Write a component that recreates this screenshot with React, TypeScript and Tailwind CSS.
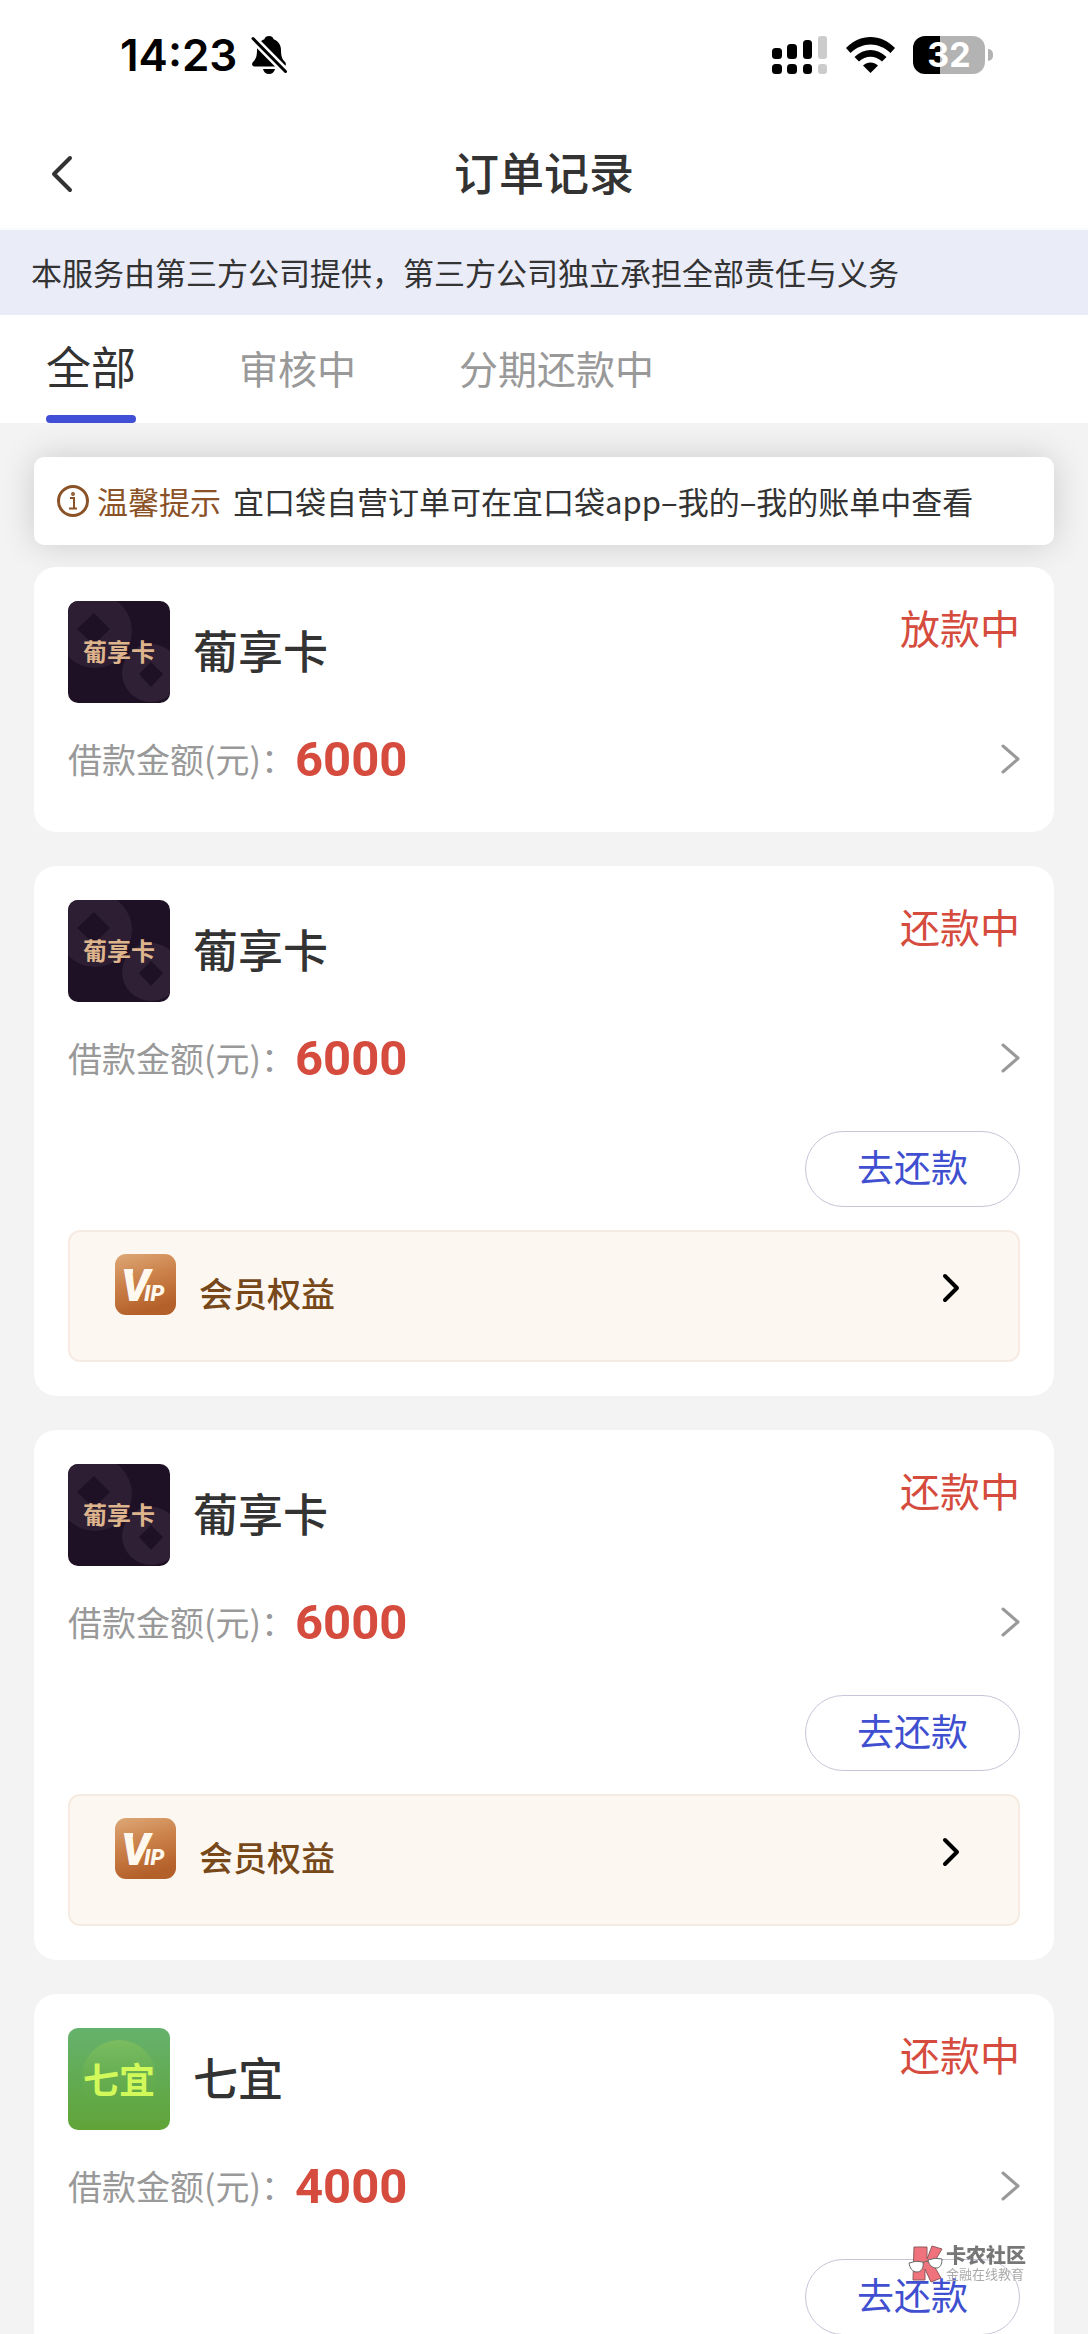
type Order = {
  id: number;
  name: string;
  logo: "puxiang" | "qiyi";
  amount: string;
  status: string;
  repay: boolean;
  vip: boolean;
};

const tabs = ["全部", "审核中", "分期还款中"];

const orders: Order[] = [
  { id: 1, name: "葡享卡", logo: "puxiang", amount: "6000", status: "放款中", repay: false, vip: false },
  { id: 2, name: "葡享卡", logo: "puxiang", amount: "6000", status: "还款中", repay: true, vip: true },
  { id: 3, name: "葡享卡", logo: "puxiang", amount: "6000", status: "还款中", repay: true, vip: true },
  { id: 4, name: "七宜", logo: "qiyi", amount: "4000", status: "还款中", repay: true, vip: false },
];

function StatusBar() {
  return (
    <div className="flex h-[110px] items-center justify-between pr-[95px] pl-[120px]">
      <div className="flex items-center gap-[14px]">
        <span className="font-['Inter',sans-serif] text-[44px] leading-none font-semibold text-black">14:23</span>
        <svg width="36" height="40" viewBox="0 0 36 40" aria-hidden="true">
          <path
            d="M18 1c2.400 0 4 1.200 4.600 3.200C27.500 6 30 10 30 15c0 7 1.500 9.500 4 12 1.500 1.600 1.200 4.500-1.500 4.500h-29C.8 31.500.5 28.600 2 27c2.500-2.500 4-5 4-12 0-5 2.500-9 7.400-10.800C14 2.200 15.600 1 18 1z"
            fill="#000"
          />
          <path d="M12 34h12c-.6 3-3 5-6 5s-5.400-2-6-5z" fill="#000" />
          <path d="M2 3.500L34.500 36.500" stroke="#fff" strokeWidth="8" />
          <path d="M2 3.500L34.500 36.500" stroke="#000" strokeWidth="3" strokeLinecap="round" />
        </svg>
      </div>
      <div className="flex items-center gap-[18px]">
        <svg width="56" height="38" viewBox="0 0 56 38" aria-hidden="true">
          <rect x="0" y="12" width="10" height="11" rx="3.500" />
          <rect x="15" y="8" width="10" height="15" rx="3.500" />
          <rect x="31" y="4" width="9" height="19" rx="3.500" />
          <rect x="46" y="0" width="9" height="23" rx="3" fill="#ccc" />
          <rect x="0" y="28" width="10" height="10" rx="3.500" />
          <rect x="15" y="28" width="10" height="10" rx="3.500" />
          <rect x="31" y="28" width="9" height="10" rx="3.500" />
          <rect x="46" y="28" width="9" height="10" rx="3" fill="#ccc" />
        </svg>
        <svg width="49" height="36" viewBox="0 0 49 36" aria-hidden="true">
          <path d="M0 11C14-3.600 35-3.600 49 11l-4.500 5C32.500 4.500 16.500 4.500 4.500 16z" />
          <path d="M8.500 20c9.500-9.500 22.500-9.500 32 0L36 24.500c-6.500-6.300-16.500-6.300-23 0z" />
          <path d="M17 28.500c4.500-4 10.500-4 15 0L24.500 36z" />
        </svg>
        <div className="flex items-center gap-[3px]">
          <div className="flex h-[38px] w-[72px] items-center justify-center rounded-[12px] bg-linear-to-r from-black from-38% to-[#b3b3b3] to-38% font-['Inter',sans-serif] text-[34px] leading-none font-bold text-white">
            32
          </div>
          <div className="h-3 w-[5px] rounded-r-full bg-[#b3b3b3]" />
        </div>
      </div>
    </div>
  );
}

function PuxiangLogo() {
  return (
    <svg className="size-[102px] rounded-[10px]" viewBox="0 0 102 102" role="img" aria-label="葡享卡">
      <rect width="102" height="102" fill="#1e1126" />
      <circle cx="27" cy="30" r="37" fill="#2d1e33" />
      <path d="M26 12l16 16-16 16L9 28z" fill="#1e1126" />
      <circle cx="83" cy="72" r="29" fill="#2f2035" />
      <path d="M83 61l12 12-12 13-12-13z" fill="#1e1126" />
      <text x="51" y="60" textAnchor="middle" fontSize="24" fontWeight="700" fill="#deb48d">
        葡享卡
      </text>
    </svg>
  );
}

function QiyiLogo() {
  return (
    <svg className="size-[102px] rounded-[10px]" viewBox="0 0 102 102" role="img" aria-label="七宜">
      <defs>
        <linearGradient id="qiyi-bg" x1="0" y1="0" x2="0" y2="1">
          <stop offset="0" stopColor="#65b26d" />
          <stop offset="1" stopColor="#60a438" />
        </linearGradient>
        <linearGradient id="qiyi-disc" x1="0" y1="0" x2="0" y2="1">
          <stop offset="0" stopColor="#7bbd60" />
          <stop offset="0.900" stopColor="#60a840" stopOpacity="0" />
        </linearGradient>
      </defs>
      <rect width="102" height="102" fill="url(#qiyi-bg)" />
      <circle cx="51" cy="49" r="37" fill="url(#qiyi-disc)" />
      <text x="51" y="66" textAnchor="middle" fontSize="36" fontWeight="700" fill="#d2f95a">
        七宜
      </text>
    </svg>
  );
}

function VipIcon() {
  return (
    <svg width="61" height="61" viewBox="0 0 61 61" role="img" aria-label="VIP">
      <defs>
        <linearGradient id="vip-bg" x1="0" y1="0" x2="0.300" y2="1">
          <stop offset="0" stopColor="#dda878" />
          <stop offset="0.500" stopColor="#cb8149" />
          <stop offset="1" stopColor="#b4602a" />
        </linearGradient>
      </defs>
      <rect width="61" height="61" rx="11" fill="url(#vip-bg)" />
      <g fill="#fff8ee" fontFamily="Roboto" fontStyle="italic" fontWeight="900">
        <path d="M10 15h8v4h-6.500z" />
        <text x="6" y="47" fontSize="45">
          V
        </text>
        <text x="29" y="47" fontSize="22">
          IP
        </text>
      </g>
    </svg>
  );
}

function OrderCard({ order }: { order: Order }) {
  return (
    <article className="rounded-[22px] bg-white p-[34px]">
      <div className="flex items-start">
        {order.logo === "puxiang" ? <PuxiangLogo /> : <QiyiLogo />}
        <h2 className="ml-[23px] flex-1 self-center pb-[6px] text-[45px] leading-none font-medium text-[#333]">{order.name}</h2>
        <span className="mt-[6px] text-[40px] leading-none text-[#d54b3d]">{order.status}</span>
      </div>
      <a href="#" className="mt-[26px] mb-[9px] flex h-[60px] items-center">
        <span className="text-[34px] leading-none text-[#999]">借款金额(元)：</span>
        <span className="flex-1 font-['Roboto',sans-serif] text-[49px] leading-none font-bold text-[#d54b3d]">
          {order.amount}
        </span>
        <svg width="20" height="32" viewBox="0 0 20 32" fill="none" stroke="#999" strokeWidth="3" aria-hidden="true">
          <path d="M3 3l15 13L3 29" strokeLinecap="round" strokeLinejoin="round" />
        </svg>
      </a>
      {order.repay && (
        <div className="mt-[43px] flex justify-end">
          <button
            type="button"
            className="h-[76px] rounded-full border border-[#c6c6d8] px-[51px] pb-[6px] text-[37px] leading-none text-[#404fd0]"
          >
            去还款
          </button>
        </div>
      )}
      {order.vip && (
        <a
          href="#"
          className="mt-[23px] flex h-[132px] items-start rounded-[12px] border-2 border-[#f6ebe2] bg-[#fcf8f1] pt-[22px] pr-[58px] pl-[45px]"
        >
          <VipIcon />
          <span className="mt-[22px] ml-[23px] flex-1 text-[34px] leading-none font-medium text-[#774819]">会员权益</span>
          <svg className="mt-[18px]" width="19" height="32" viewBox="0 0 19 32" fill="none" stroke="#000" strokeWidth="4" aria-hidden="true">
            <path d="M4 4l12 12L4 28" strokeLinecap="round" strokeLinejoin="round" />
          </svg>
        </a>
      )}
    </article>
  );
}

function CommunityMark() {
  return (
    <div className="pointer-events-none fixed right-[62px] bottom-[51px] flex items-center gap-[2px]">
      <svg width="36" height="38" viewBox="0 0 36 38" aria-hidden="true">
        <path
          d="M6 2h13v12l5-13 10 3-9 15 8 14-10 4-6-13v11H5z"
          fill="#f0727c"
          stroke="#8d5a5c"
          strokeWidth="1"
        />
        <g fill="#fff" stroke="#666" strokeWidth="1">
          <path d="M1 18q7-3 14-1c1 6-2 10-6 10-5 0-7-4-8-9z" />
          <path d="M20 15q7-3 14-1c0 6-2 9-6 9s-7-3-8-8z" />
          <path d="M15 18q2-2 5-2" fill="none" />
        </g>
      </svg>
      <div className="flex flex-col gap-[2px] pb-[3px] text-[#777]">
        <span className="text-[20px] leading-none font-black">卡农社区</span>
        <span className="text-[13px] leading-none text-[#aaa]">金融在线教育</span>
      </div>
    </div>
  );
}

export default function App() {
  return (
    <div className="flex h-screen flex-col overflow-hidden bg-[#f3f3f3] font-['Noto_Sans_CJK_SC',sans-serif]">
      <header className="bg-white">
        <StatusBar />
        <div className="grid h-[120px] grid-cols-3 items-center border-b-2 border-[#fafafa] px-[50px] pt-[10px]">
          <button type="button" aria-label="返回" className="justify-self-start">
            <svg width="24" height="40" viewBox="0 0 24 40" fill="none" stroke="#333" strokeWidth="4" aria-hidden="true">
              <path d="M20 4L4 20l16 16" strokeLinecap="round" strokeLinejoin="round" />
            </svg>
          </button>
          <h1 className="pb-[6px] text-center text-[45px] leading-none font-medium text-[#333]">订单记录</h1>
        </div>
      </header>
      <p className="bg-[#eaecf8] px-[31px] pt-[26px] pb-[28px] text-[31px] leading-[31px] text-[#333]">
        本服务由第三方公司提供，第三方公司独立承担全部责任与义务
      </p>
      <nav className="flex h-[108px] gap-[103px] bg-white px-[46px]">
        {tabs.map((tab, index) => (
          <button
            key={tab}
            type="button"
            className={
              index === 0
                ? "flex flex-col items-center justify-between pt-[28px] text-[45px] leading-none text-[#333]"
                : "pb-[4px] text-[39px] leading-none text-[#999]"
            }
          >
            {tab}
            {index === 0 && <span className="h-[8px] w-full rounded-full bg-[#404fd6]" />}
          </button>
        ))}
      </nav>
      <main className="min-h-0 flex-1 overflow-y-auto px-[34px] pt-[34px] [scrollbar-width:none]">
        <div className="flex h-[88px] items-center rounded-[10px] bg-white px-[22px] text-[31px] leading-none text-[#333] shadow-[0_0_34px_rgba(0,0,0,0.16)]">
          <svg width="34" height="34" viewBox="0 0 34 34" fill="none" stroke="#8a5226" strokeWidth="3" aria-hidden="true">
            <circle cx="17" cy="17" r="14.500" />
            <path d="M14 14h4v10M13 24.500h8" strokeWidth="2" />
            <circle cx="17" cy="10" r="1.200" strokeWidth="1.500" />
          </svg>
          <strong className="ml-[7px] pb-[2px] font-normal text-[#8a5226]">温馨提示</strong>
          <span className="ml-3 pb-[2px]">宜口袋自营订单可在宜口袋app–我的–我的账单中查看</span>
        </div>
        <div className="relative mt-[22px] flex flex-col gap-[34px] pb-[34px]">
          {orders.map((order) => (
            <OrderCard key={order.id} order={order} />
          ))}
        </div>
      </main>
      <CommunityMark />
    </div>
  );
}
